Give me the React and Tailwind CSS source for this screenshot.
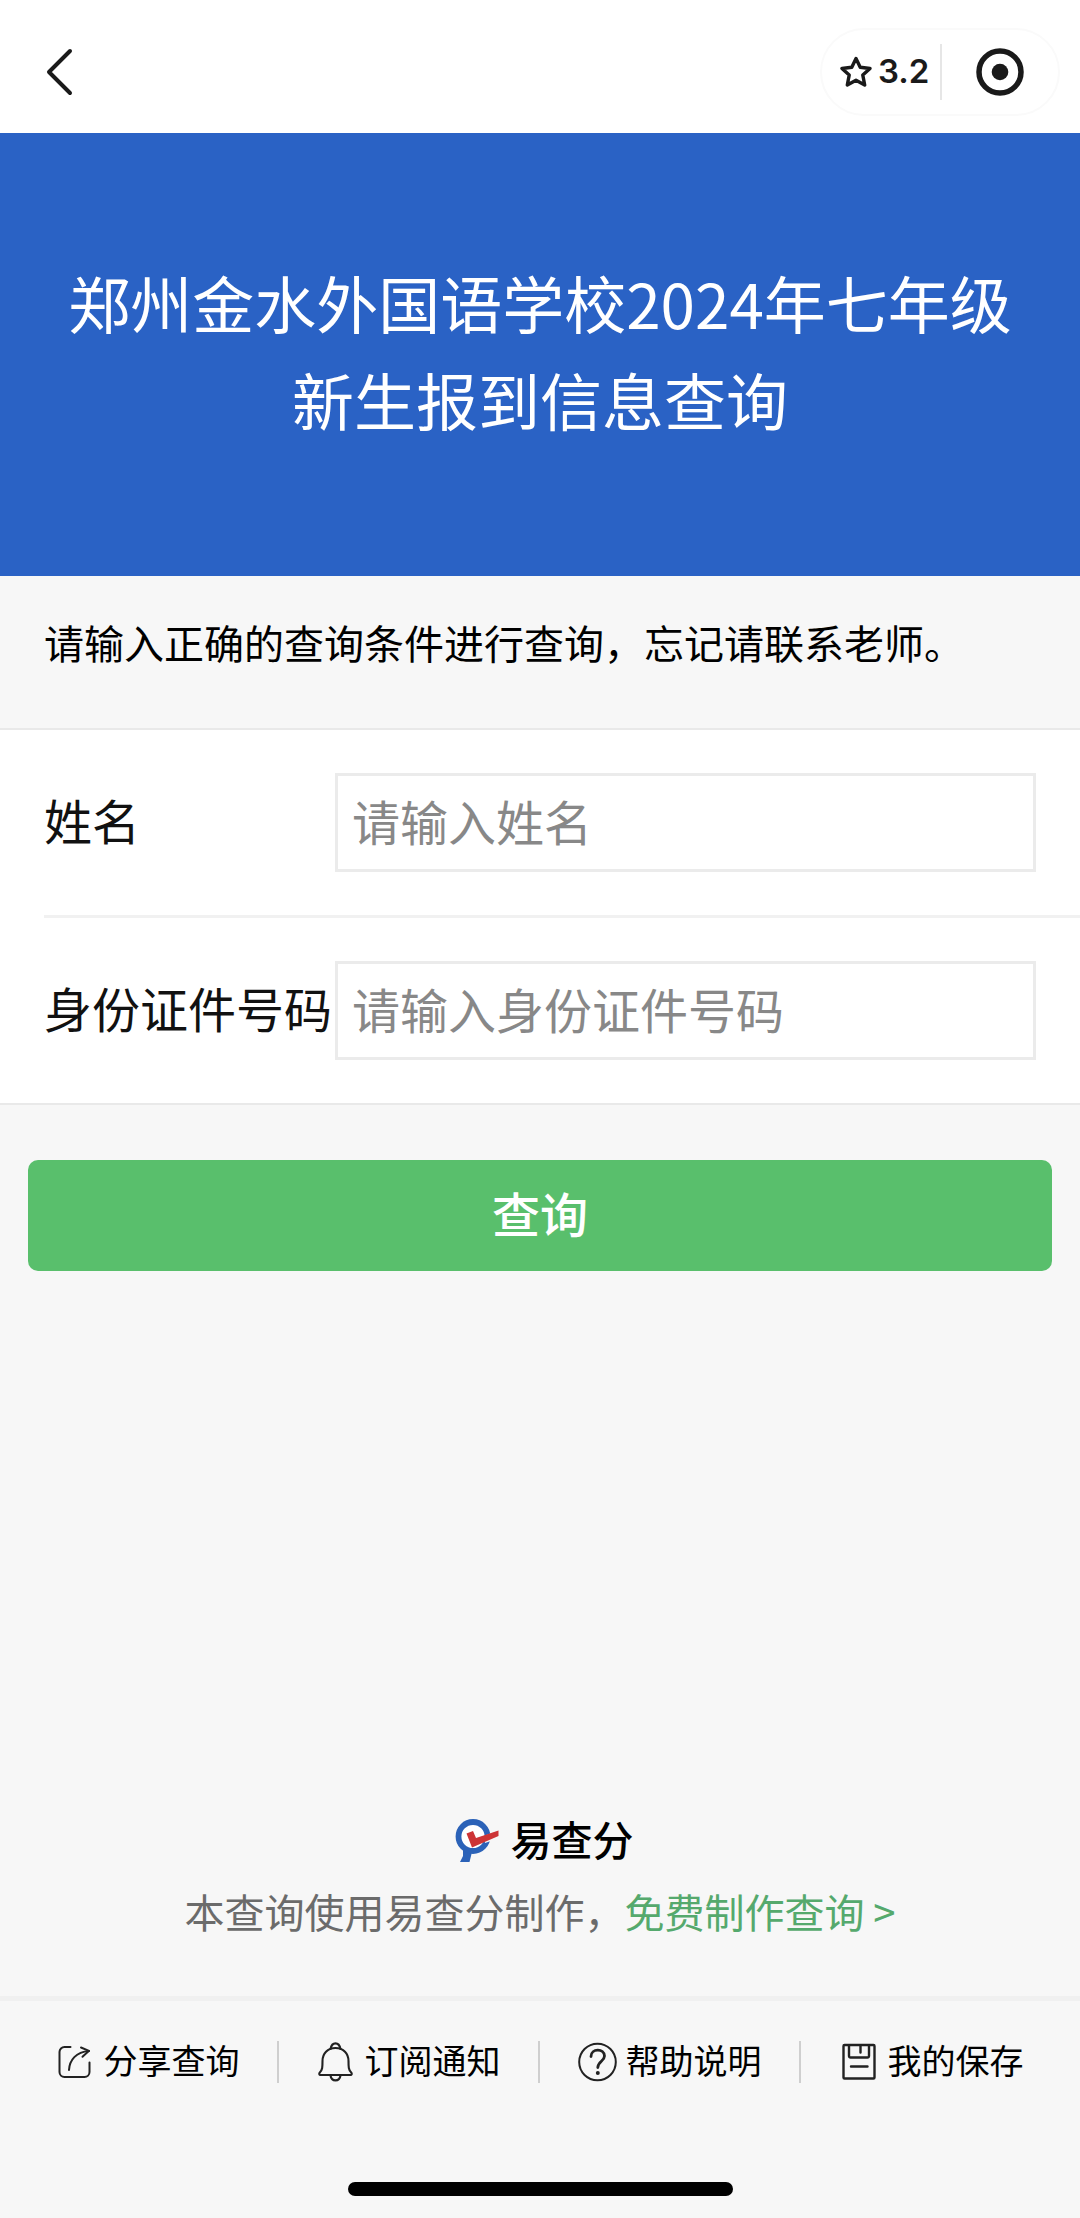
import { useState } from "react";

const FIELDS = [
  { id: "name", label: "姓名", placeholder: "请输入姓名" },
  { id: "idcard", label: "身份证件号码", placeholder: "请输入身份证件号码" },
];

function BackIcon() {
  return (
    <svg width="32" height="54" viewBox="0 0 32 54" fill="none" stroke="#1a1a1a" strokeWidth="4" strokeLinecap="round" strokeLinejoin="round">
      <path d="M27 6 6 27l21 21" />
    </svg>
  );
}

function StarIcon() {
  return (
    <svg width="32" height="32" viewBox="0 0 32 32" fill="none" stroke="#1a1a1a" strokeWidth="3.4" strokeLinejoin="round">
      <path d="M16 2.500l4.200 8.700 9.800 1.300-7.200 6.600 1.900 9.900-8.700-4.800-8.700 4.800 1.900-9.900L2 12.500l9.800-1.300z" />
    </svg>
  );
}

function TargetIcon() {
  return (
    <svg width="48" height="48" viewBox="0 0 48 48">
      <circle cx="24" cy="24" r="21" fill="none" stroke="#1a1a1a" strokeWidth="5.5" />
      <circle cx="24" cy="24" r="8.3" fill="#1a1a1a" />
    </svg>
  );
}

function BrandIcon() {
  return (
    <svg width="44" height="44" viewBox="0 0 44 44">
      <path d="M8 29h10l-3.500 14H5l3-6z" fill="#2b62b8" />
      <circle cx="18" cy="17.5" r="14.5" fill="#fff" stroke="#2b62b8" strokeWidth="5.800" />
      <path d="M29 17l10-4v8l-9 3z" fill="#f7f7f7" />
      <path d="M11.500 14.500l6.500-2.500 3 7L43.500 11.500V17L17 28.500z" fill="#cd3436" />
    </svg>
  );
}

function ShareIcon() {
  return (
    <svg width="40" height="40" viewBox="0 0 40 40" fill="none" stroke="#222" strokeWidth="2" strokeLinecap="round" strokeLinejoin="round">
      <path d="M14.500 5H8.500a5 5 0 0 0-5 5v20a5 5 0 0 0 5 5h20a5 5 0 0 0 5-5v-9.500" />
      <path d="M13 28c.5-10 7-18 20-19" />
      <path d="M25 5.500l8 3.300-6.500 6" />
    </svg>
  );
}

function BellIcon() {
  return (
    <svg width="40" height="40" viewBox="0 0 40 40" fill="none" stroke="#222" strokeWidth="2.100" strokeLinecap="round" strokeLinejoin="round">
      <path d="M13.500 7c1.500-7.500 8.500-7.500 10 0" />
      <path d="M18.500 6C10.500 6 5.500 11.500 5.500 19c0 6 0 9-2.700 11.500-1 1-.6 2.500.7 2.500h30c1.300 0 1.700-1.500.7-2.500-2.700-2.500-2.700-5.500-2.700-11.500 0-7.500-5-13-13-13z" />
      <path d="M13.500 33.500c1 6.500 9 6.500 10 0" />
    </svg>
  );
}

function HelpIcon() {
  return (
    <svg width="40" height="40" viewBox="0 0 40 40" fill="none" stroke="#222" strokeLinecap="round">
      <circle cx="19.500" cy="20" r="18.300" strokeWidth="2" />
      <path d="M13 14.500c0-8.500 13.500-8.500 13.500-.5 0 5-6.700 5.500-6.700 11.500" strokeWidth="2.800" />
      <circle cx="19.800" cy="31" r="2" fill="#222" stroke="none" />
    </svg>
  );
}

function SaveIcon() {
  return (
    <svg width="40" height="40" viewBox="0 0 40 40" fill="none" stroke="#222" strokeWidth="2.400" strokeLinecap="round" strokeLinejoin="round">
      <rect x="3.500" y="3" width="31" height="33.500" rx="1" />
      <path d="M9 3.500V14a1.500 1.500 0 0 0 1.500 1.500h17A1.500 1.500 0 0 0 29 14V3.500" />
      <path d="M20.500 4v6.500M11 24.500h16.500" />
    </svg>
  );
}

const ACTIONS = [
  { text: "分享查询", Icon: ShareIcon },
  { text: "订阅通知", Icon: BellIcon },
  { text: "帮助说明", Icon: HelpIcon },
  { text: "我的保存", Icon: SaveIcon },
];

export default function App() {
  const [form, setForm] = useState({ name: "", idcard: "" });

  return (
    <div className="flex min-h-screen flex-col bg-[#f7f7f7] font-['Noto_Sans_CJK_SC',sans-serif] text-black">
      <header className="flex h-[133px] items-center justify-between bg-white pt-[10px] pr-5 pl-[43px]">
        <button type="button" aria-label="返回">
          <BackIcon />
        </button>
        <div className="flex h-[88px] w-60 items-center rounded-full border-2 border-[#fafafa]">
          <button type="button" className="flex flex-1 items-center gap-[6px] pl-[18px] font-[Inter,sans-serif] text-[33px] leading-none font-semibold text-[#1a1a1a]">
            <StarIcon />
            3.2
          </button>
          <span className="h-14 w-[2px] bg-[#e6e6e6]" />
          <button type="button" aria-label="关闭" className="flex w-[116px] justify-center">
            <TargetIcon />
          </button>
        </div>
      </header>

      <h1 className="flex h-[443px] items-center justify-center bg-[#2a62c5] px-14 pb-2 text-center text-[62px] leading-[97px] font-normal text-white">
        郑州金水外国语学校2024年七年级
        <br />
        新生报到信息查询
      </h1>

      <p className="px-11 pt-9 pb-14 text-[40px] leading-[60px]">
        请输入正确的查询条件进行查询，忘记请联系老师。
      </p>

      <form onSubmit={(e) => e.preventDefault()}>
        <div className="border-y-2 border-[#e9e9e9] bg-white pl-11">
          {FIELDS.map((f) => (
            <div key={f.id} className="flex items-center border-b-3 border-[#f1f1f1] py-[43px] pr-11 last:border-b-0">
              <label htmlFor={f.id} className="w-[291px] shrink-0 pb-2 text-5xl leading-[60px] whitespace-nowrap text-[#111]">
                {f.label}
              </label>
              <input
                id={f.id}
                type="text"
                value={form[f.id]}
                onChange={(e) => setForm({ ...form, [f.id]: e.target.value })}
                placeholder={f.placeholder}
                className="h-[99px] min-w-0 flex-1 border-3 border-[#ebebeb] bg-white px-[14px] pb-[6px] text-5xl text-[#111] placeholder-[#888] outline-none"
              />
            </div>
          ))}
        </div>
        <div className="px-7 pt-[55px]">
          <button type="submit" className="h-[111px] w-full rounded-[10px] bg-[#59bf6c] pb-2 text-5xl font-medium text-white">
            查询
          </button>
        </div>
      </form>

      <footer className="mt-auto">
        <div className="flex items-center justify-center gap-3 pl-2">
          <BrandIcon />
          <span className="pb-[6px] text-[41px] leading-[54px] font-medium">易查分</span>
        </div>
        <p className="mt-[10px] text-center text-[40px] leading-[60px] text-[#6b6b6b]">
          本查询使用易查分制作，
          <a href="#" className="text-[#55a96d]">免费制作查询 &gt;</a>
        </p>
        <nav className="mt-[55px] border-t-5 border-[#f0f0f0] px-[18px] pt-10">
          <ul className="grid grid-cols-4 divide-x-2 divide-[#cfcfcf]">
            {ACTIONS.map(({ text, Icon }) => (
              <li key={text} className="flex h-[42px] items-center justify-center">
                <button type="button" className="flex items-center gap-2 text-[34px] leading-[42px]">
                  <Icon />
                  <span className="pb-1">{text}</span>
                </button>
              </li>
            ))}
          </ul>
        </nav>
        <div className="mx-auto mt-[99px] mb-[22px] h-[14px] w-[385px] rounded-full bg-black" />
      </footer>
    </div>
  );
}
